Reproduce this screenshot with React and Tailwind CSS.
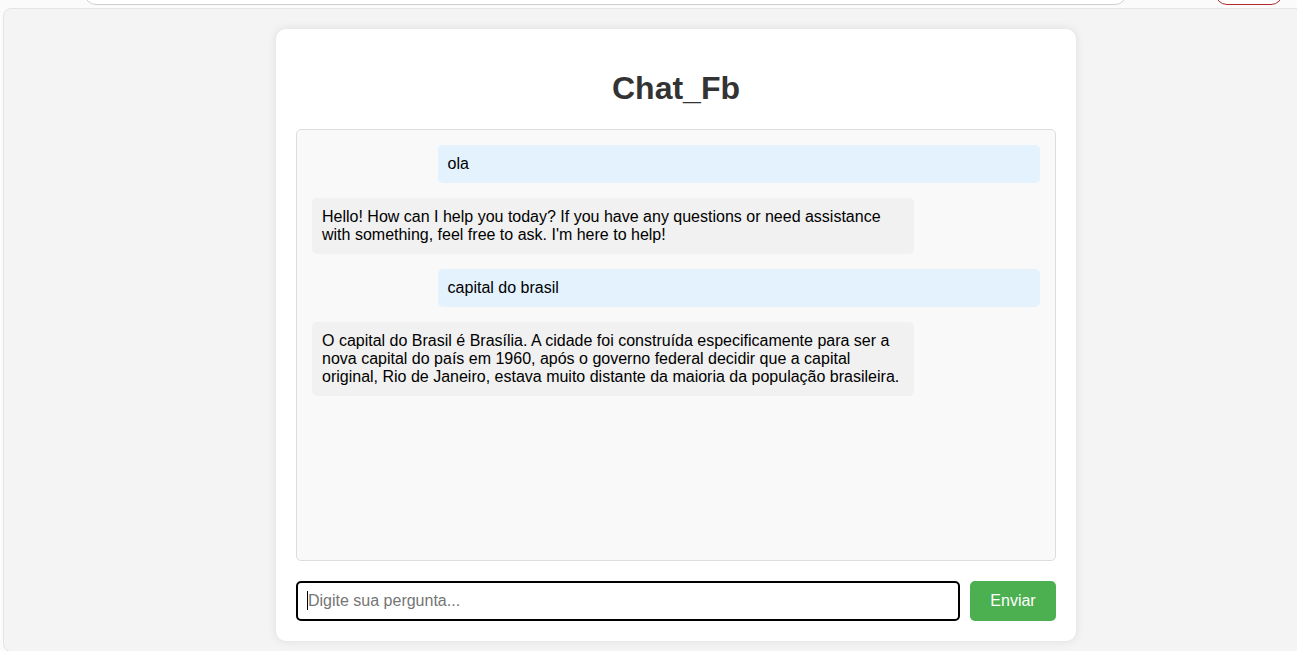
export default function App() {
  const font = { fontFamily: '"Liberation Sans", Arial, sans-serif' };
  const msgs = [
    { u: true, t: "ola" },
    { u: false, t: "Hello! How can I help you today? If you have any questions or need assistance with something, feel free to ask. I'm here to help!" },
    { u: true, t: "capital do brasil" },
    { u: false, t: "O capital do Brasil é Brasília. A cidade foi construída especificamente para ser a nova capital do país em 1960, após o governo federal decidir que a capital original, Rio de Janeiro, estava muito distante da maioria da população brasileira." },
  ];
  return (
    <div className="w-[1297px] h-[651px] overflow-hidden bg-[#fbfbfb] relative" style={font}>
      <div className="h-[8px] relative">
        <div className="absolute left-[84px] top-[-20px] w-[1043px] h-[25px] bg-white border border-[#cfcfcf] rounded-[12px]" />
        <div className="absolute left-[1215px] top-[-20px] w-[68px] h-[25px] bg-white border border-[#b3262b] rounded-[12px]" />
      </div>
      <div className="ml-[3px] w-[1346px] h-[644px] bg-[#f4f4f4] border border-[#e4e4e4] rounded-[8px] pt-[20px]">
        <div className="mx-auto w-[800px] bg-white rounded-[10px] shadow-[0_0_10px_rgba(0,0,0,0.1)] p-[20px]">
          <h1 className="text-center text-[32px] font-bold text-[#333] leading-[37px] my-[21.44px]">Chat_Fb</h1>
          <div className="h-[432px] bg-[#f9f9f9] border border-[#ddd] rounded-[5px] p-[15px] overflow-hidden">
            {msgs.map((m, i) => (
              <div
                key={i}
                className={
                  (m.u ? "ml-auto bg-[#e3f2fd] " : "bg-[#f1f1f1] ") +
                  "box-content max-w-[80%] p-[10px] mb-[15px] rounded-[5px] text-[16px] leading-[normal] text-black"
                }
              >
                {m.t}
              </div>
            ))}
          </div>
          <div className="flex gap-[10px] mt-[20px]">
            <div className="flex-1 h-[40px] border-2 border-black rounded-[5px] flex items-center pl-[9px]">
              <span className="w-px h-[19px] bg-black" />
              <span className="text-[16px] text-[#757575]">Digite sua pergunta...</span>
            </div>
            <button className="w-[86px] h-[40px] bg-[#4caf50] text-white text-[16px] rounded-[5px]" style={font}>Enviar</button>
          </div>
        </div>
      </div>
    </div>
  );
}
